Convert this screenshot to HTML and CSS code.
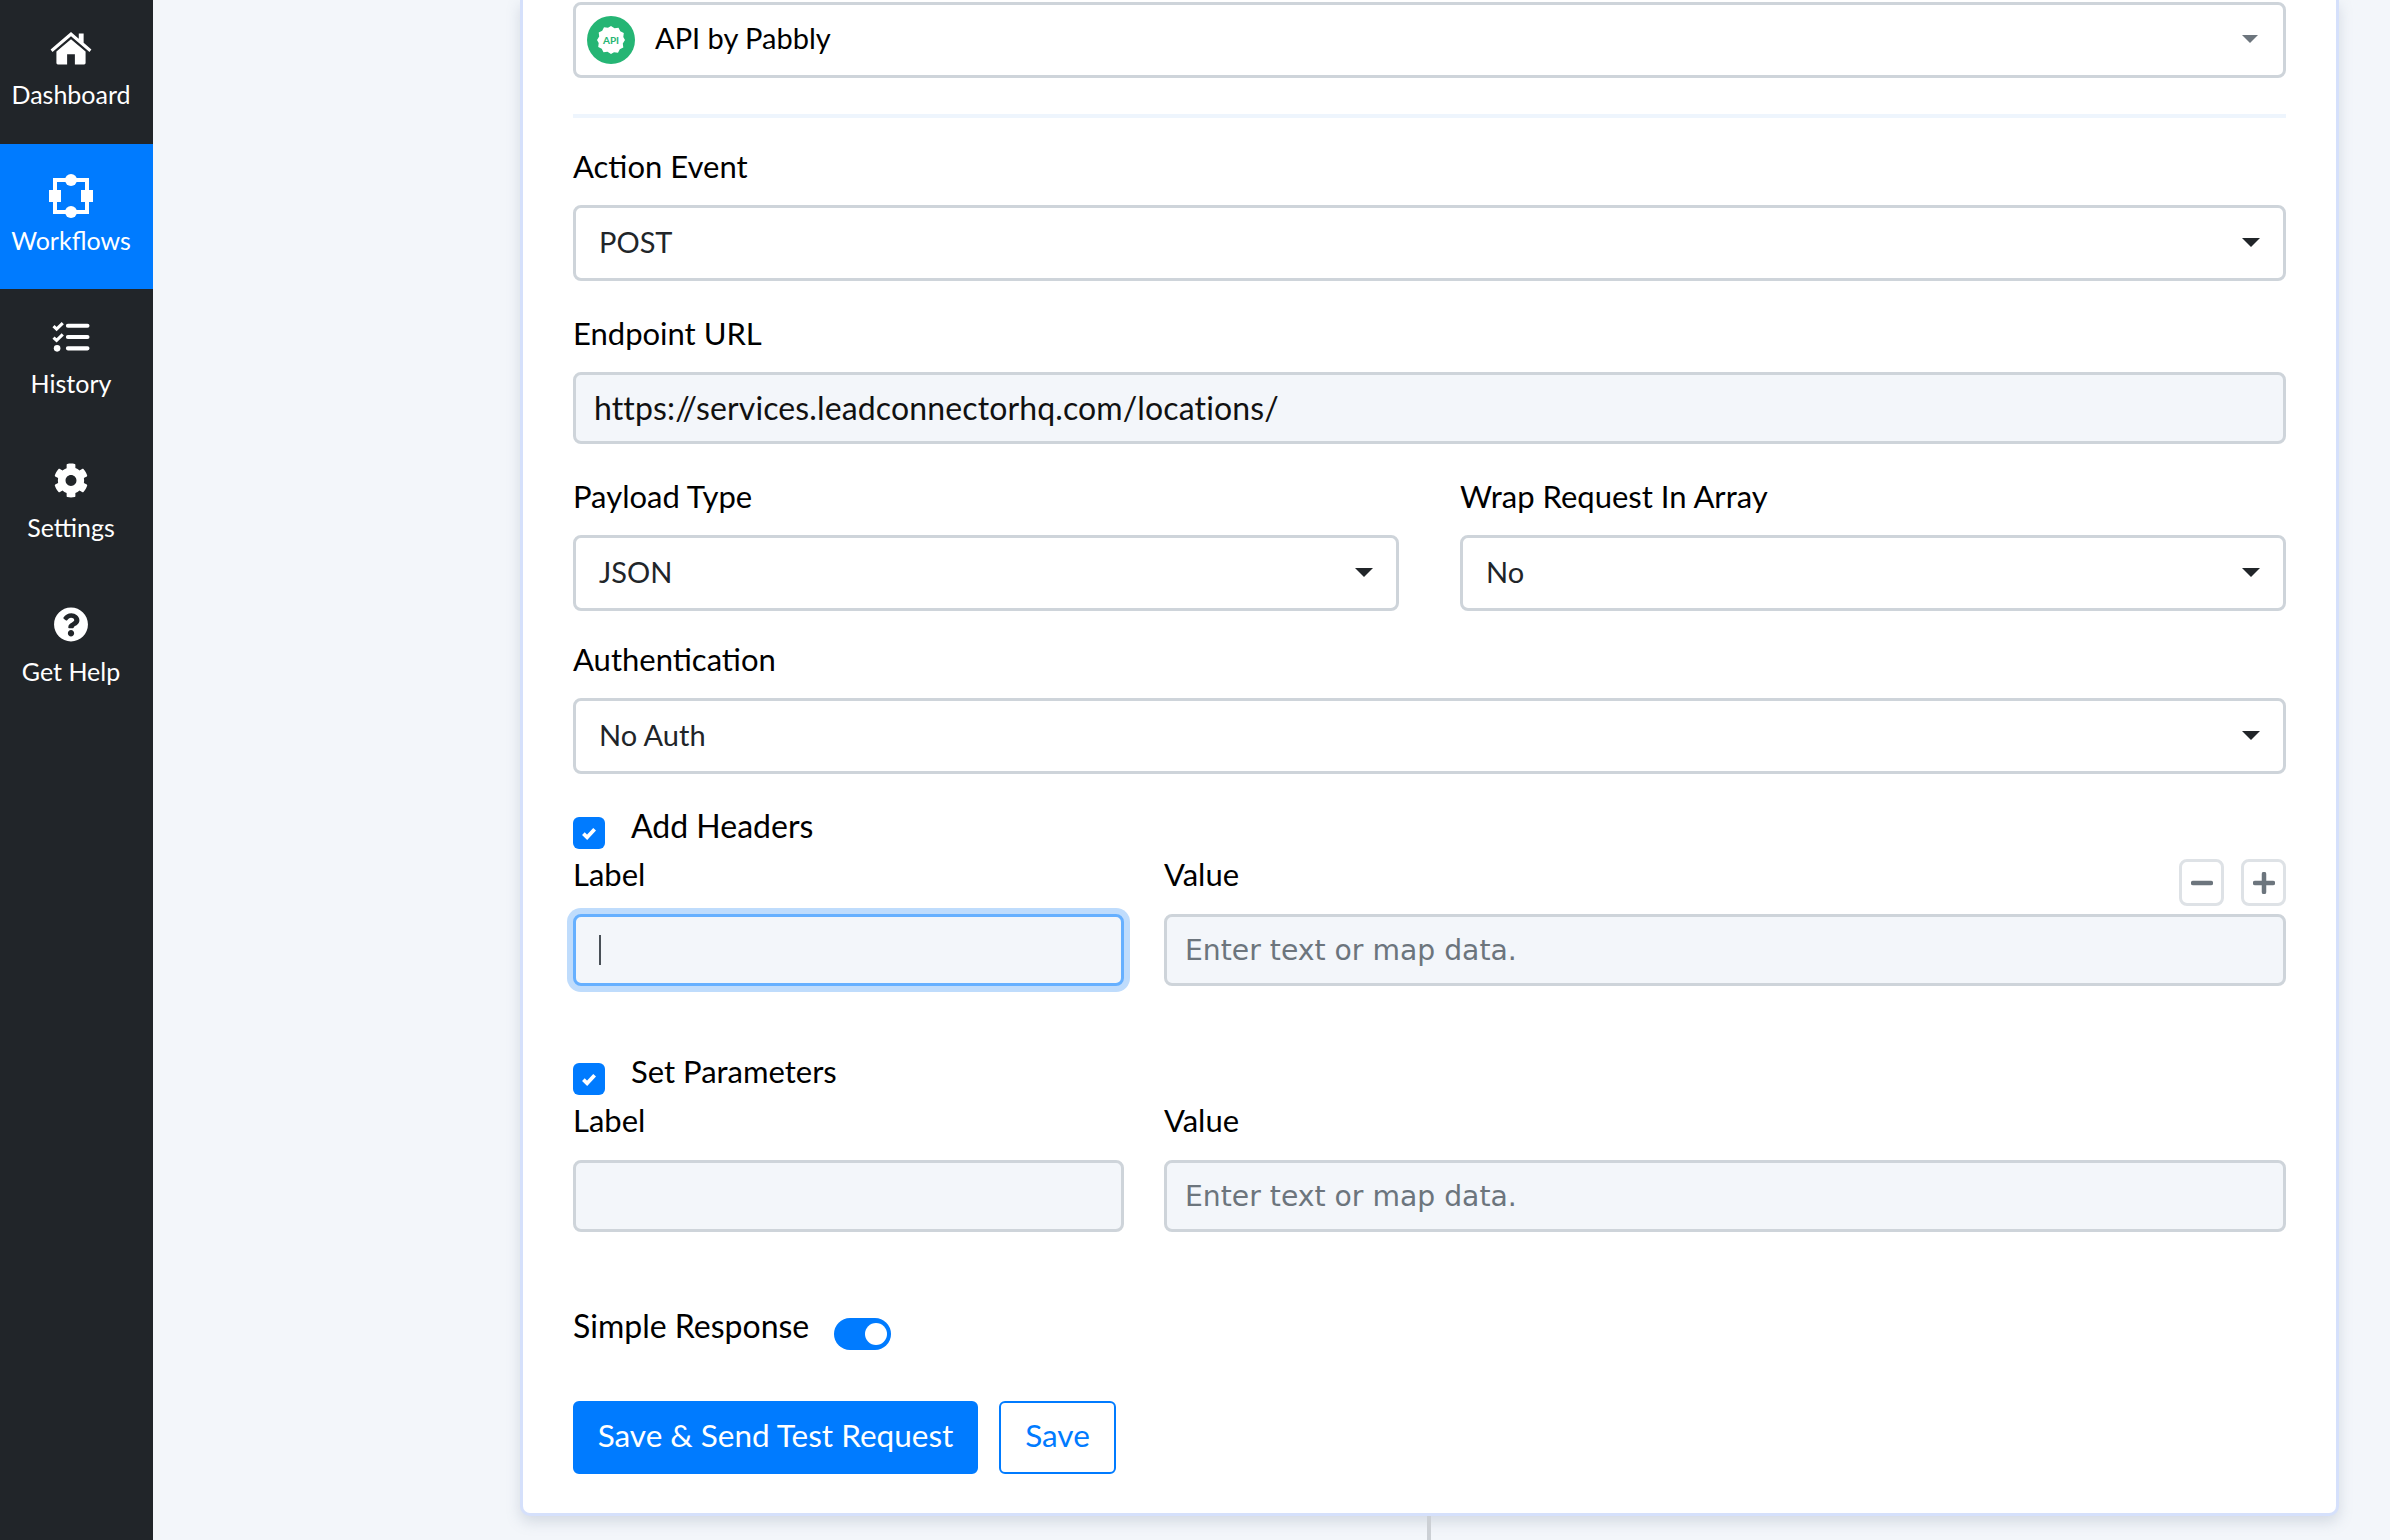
FILE: index.html
```html
<!DOCTYPE html>
<html lang="en">
<head>
  <meta charset="UTF-8">
  <meta name="viewport" content="width=device-width, initial-scale=1.0">
  <title>Workflow</title>
  <link rel="stylesheet" href="styles.css">
</head>
<body>
  <nav class="sidebar">
    <a class="nav-item">
      <svg class="nav-icon" viewBox="0 -2 44 36"><path fill="#fff" d="M22 0 1 18l2 2.600L22 4.400l19 16.200 2-2.600-8-6.800V1.500h-5v5.500z"/><path fill="#fff" d="M22 7.500 7 20.200V32a1.500 1.500 0 0 0 1.500 1.500H18V23h8v10.500h9.500A1.500 1.500 0 0 0 37 32V20.200z"/></svg>
      <span>Dashboard</span>
    </a>
    <a class="nav-item active">
      <svg class="nav-icon nav-icon-large" viewBox="0 0 44 44"><path fill="none" stroke="#fff" stroke-width="4" d="M6 6h32v32H6z"/><circle fill="#fff" cx="22" cy="6" r="6"/><circle fill="#fff" cx="22" cy="38" r="6"/><path fill="#fff" d="M0 16h12v12H0zM32 16h12v12H32z"/></svg>
      <span>Workflows</span>
    </a>
    <a class="nav-item">
      <svg class="nav-icon" viewBox="0 -3 36 34"><path fill="none" stroke="#fff" stroke-width="3" d="M1 4l3 2.800L10 1M1 15l3 2.800L10 12"/><circle fill="#fff" cx="4.500" cy="25.500" r="3.200"/><path stroke="#fff" stroke-width="4" stroke-linecap="round" d="M15 3.500h19M15 14.500h19M15 25.500h19"/></svg>
      <span>History</span>
    </a>
    <a class="nav-item">
      <svg class="nav-icon" viewBox="0 0 512 512"><path fill="#fff" d="M487.400 315.700l-42.600-24.600c4.300-23.200 4.300-47 0-70.200l42.600-24.600c4.900-2.800 7.100-8.600 5.500-14-11.100-35.600-30-67.800-54.700-94.600-3.800-4.100-10-5.100-14.800-2.300L380.800 110c-17.900-15.400-38.500-27.300-60.800-35.100V25.800c0-5.600-3.900-10.500-9.400-11.700-36.700-8.200-74.300-7.800-109.200 0-5.500 1.200-9.400 6.100-9.400 11.700V75c-22.200 7.900-42.800 19.800-60.800 35.100L88.700 85.500c-4.900-2.800-11-1.900-14.800 2.300-24.700 26.700-43.600 58.900-54.700 94.600-1.700 5.400.6 11.200 5.500 14L67.300 221c-4.300 23.200-4.300 47 0 70.200l-42.600 24.600c-4.900 2.800-7.100 8.600-5.500 14 11.100 35.600 30 67.800 54.700 94.600 3.800 4.100 10 5.100 14.800 2.300l42.600-24.600c17.900 15.400 38.500 27.300 60.800 35.100v49.200c0 5.600 3.900 10.500 9.400 11.700 36.700 8.200 74.300 7.800 109.200 0 5.500-1.200 9.400-6.100 9.400-11.700v-49.200c22.200-7.900 42.800-19.800 60.800-35.100l42.600 24.600c4.900 2.800 11 1.900 14.800-2.300 24.700-26.700 43.600-58.900 54.700-94.600 1.500-5.500-.7-11.300-5.600-14.100zM256 336c-44.100 0-80-35.900-80-80s35.900-80 80-80 80 35.900 80 80-35.900 80-80 80z"/></svg>
      <span>Settings</span>
    </a>
    <a class="nav-item">
      <svg class="nav-icon" viewBox="0 0 512 512"><path fill="#fff" d="M504 256c0 137-111 248-248 248S8 393 8 256 119 8 256 8s248 111 248 248zM262.700 90c-54.500 0-89.300 23-116.500 63.800-3.500 5.300-2.400 12.400 2.700 16.300l34.700 26.300c5.200 3.900 12.600 3 16.700-2.100 17.900-22.700 30.100-35.800 57.300-35.800 20.400 0 45.700 13.100 45.700 32.900 0 15-12.400 22.700-32.500 34C247.100 238.500 216 254.900 216 296v4c0 6.600 5.400 12 12 12h56c6.600 0 12-5.400 12-12v-1.300c0-28.500 83.200-29.700 83.200-106.700 0-58-60.200-102-116.500-102zM256 338c-25.400 0-46 20.600-46 46 0 25.400 20.600 46 46 46s46-20.600 46-46c0-25.400-20.600-46-46-46z"/></svg>
      <span>Get Help</span>
    </a>
  </nav>

  <main class="content">
    <section class="card">
      <div class="select select-muted">
        <span class="app-logo">
          <svg viewBox="0 0 48 48"><circle cx="24" cy="24" r="24" fill="#25b574"/><path fill="#fff" d="M24 10l3.500 2.200 4-.5 1.800 3.500 3.500 1.800-.5 4L38 24l-2.200 3.500.5 4-3.500 1.800-1.800 3.500-4-.5L24 38l-3.500-2.200-4 .5-1.800-3.500-3.500-1.800.5-4L10 24l2.200-3.500-.5-4 3.500-1.800 1.800-3.500 4 .5z"/><text x="24" y="27.500" class="app-logo-text">API</text></svg>
        </span>
        <span class="select-value">API by Pabbly</span>
      </div>
      <hr class="divider">

      <label class="field-label">Action Event</label>
      <div class="select"><span class="select-value">POST</span></div>

      <label class="field-label">Endpoint URL</label>
      <div class="text-input url-input">https://services.leadconnectorhq.com/locations/</div>

      <div class="two-col">
        <div>
          <label class="field-label">Payload Type</label>
          <div class="select"><span class="select-value">JSON</span></div>
        </div>
        <div>
          <label class="field-label">Wrap Request In Array</label>
          <div class="select"><span class="select-value">No</span></div>
        </div>
      </div>

      <label class="field-label">Authentication</label>
      <div class="select"><span class="select-value">No Auth</span></div>

      <div class="check-row">
        <span class="checkbox"><svg viewBox="0 0 16 16"><path fill="none" stroke="#fff" stroke-width="3" d="M3.500 8.500l3 3 6-6.500"/></svg></span>
        <span class="check-label">Add Headers</span>
      </div>
      <div class="pair-row">
        <div class="pair-label-col">
          <span class="pair-label">Label</span>
          <div class="text-input focused"><span class="caret"></span></div>
        </div>
        <div class="pair-value-col">
          <div class="pair-head">
            <span class="pair-label">Value</span>
            <div class="row-buttons">
              <span class="row-button"><svg viewBox="0 0 22 22"><path stroke="#6c757d" stroke-width="4.500" stroke-linecap="round" d="M2 11h18"/></svg></span>
              <span class="row-button"><svg viewBox="0 0 22 22"><path stroke="#6c757d" stroke-width="4.500" stroke-linecap="round" d="M2 11h18M11 2v18"/></svg></span>
            </div>
          </div>
          <div class="text-input placeholder">Enter text or map data.</div>
        </div>
      </div>

      <div class="check-row check-row-second">
        <span class="checkbox"><svg viewBox="0 0 16 16"><path fill="none" stroke="#fff" stroke-width="3" d="M3.500 8.500l3 3 6-6.500"/></svg></span>
        <span class="check-label check-label-params">Set Parameters</span>
      </div>
      <div class="pair-row">
        <div class="pair-label-col">
          <span class="pair-label">Label</span>
          <div class="text-input"></div>
        </div>
        <div class="pair-value-col">
          <div class="pair-head"><span class="pair-label">Value</span></div>
          <div class="text-input placeholder">Enter text or map data.</div>
        </div>
      </div>

      <div class="toggle-row">
        <span class="toggle-label">Simple Response</span>
        <span class="toggle"></span>
      </div>

      <div class="actions">
        <button class="btn btn-primary">Save &amp; Send Test Request</button>
        <button class="btn btn-outline">Save</button>
      </div>
    </section>
    <div class="connector"></div>
  </main>
</body>
</html>
```

FILE: styles.css
```css
* {
    box-sizing: border-box;
}

html, body {
    height: 100%;
}

body {
    margin: 0;
    display: flex;
    overflow: hidden;
    font-family: Lato, "Noto Sans", sans-serif;
    font-size: 31px;
    color: #000;
    background-color: #f3f6fa;
}

.sidebar {
    width: 153px;
    flex-shrink: 0;
    background-color: #212529;
}

.nav-item {
    display: flex;
    flex-direction: column;
    align-items: center;
    height: 144px;
    padding-top: 30px;
    padding-right: 11px;
    color: #fff;
    font-size: 25px;
}

.nav-item.active {
    height: 145px;
    background-color: #007bff;
}

.nav-icon {
    height: 35px;
    width: 44px;
    margin-bottom: 14px;
}

.nav-icon-large {
    height: 44px;
    margin-bottom: 7px;
}

.content {
    flex: 1;
    padding-left: 367px;
    padding-right: 51px;
}

.card {
    height: 1516px;
    padding: 2px 50px 0;
    background-color: #fff;
    border: solid #d5e0fb;
    border-width: 0 3px 3px;
    border-radius: 0 0 10px 10px;
    box-shadow: 0 6px 14px rgba(120, 135, 160, 0.25);
}

.connector {
    width: 4px;
    height: 30px;
    margin-left: 907px;
    background-color: #ccd0d5;
}

.select {
    position: relative;
    display: flex;
    align-items: center;
    height: 76px;
    padding-left: 23px;
    background-color: #fff;
    border: 3px solid #ced4da;
    border-radius: 8px;
}

.select::after {
    content: "";
    position: absolute;
    right: 23px;
    top: 30px;
    border-style: solid;
    border-width: 9px 9px 0;
    border-color: #212529 transparent transparent;
}

.select-value {
    padding-bottom: 3px;
    font-size: 29px;
    color: #212529;
}

.select-muted {
    padding-left: 11px;
}

.select-muted::after {
    right: 25px;
    border-width: 8px 8px 0;
    border-color: #6c757d transparent transparent;
}

.select-muted .select-value {
    padding-bottom: 5px;
    color: #000;
}

.app-logo {
    display: flex;
    width: 48px;
    height: 48px;
    margin-right: 20px;
}

.app-logo-text {
    fill: #25b574;
    font-size: 10px;
    font-weight: 700;
    text-anchor: middle;
}

.divider {
    height: 4px;
    margin: 36px 0 0;
    background-color: #eef5fd;
    border: none;
}

.field-label {
    display: block;
    height: 40px;
    margin: 32px 0 19px;
    line-height: 40px;
}

.divider + .field-label,
.two-col + .field-label {
    margin-top: 28px;
}

.text-input {
    height: 72px;
    padding: 0 18px;
    line-height: 66px;
    background-color: #f3f6fa;
    border: 3px solid #ced4da;
    border-radius: 8px;
}

.url-input {
    font-size: 32px;
    letter-spacing: 0.13px;
    color: #111;
}

.placeholder {
    font-family: "DejaVu Sans", sans-serif;
    font-size: 28.250px;
    line-height: 68px;
    color: #6c757d;
}

.focused {
    display: flex;
    align-items: center;
    border-color: #66b0ff;
    box-shadow: 0 0 0 6px #bfdcfc;
}

.caret {
    width: 2px;
    height: 30px;
    margin-left: 5px;
    background-color: #495057;
}

.two-col {
    display: grid;
    grid-template-columns: 1fr 1fr;
    gap: 61px;
}

.check-row {
    display: flex;
    align-items: flex-start;
    height: 38px;
    margin-top: 43px;
}

.check-row-second {
    margin-top: 77px;
}

.checkbox {
    display: flex;
    align-items: center;
    justify-content: center;
    width: 32px;
    height: 32px;
    background-color: #007bff;
    border-radius: 6px;
}

.checkbox svg {
    width: 20px;
    height: 20px;
}

.check-label {
    height: 30px;
    margin-top: -9px;
    margin-left: 26px;
    font-size: 32px;
    line-height: 36px;
}

.check-label-params {
    margin-top: -10px;
    font-size: 31px;
}

.pair-row {
    display: flex;
    gap: 40px;
}

.pair-label-col {
    width: 551px;
}

.pair-value-col {
    flex: 1;
}

.pair-label {
    display: block;
    height: 59px;
    line-height: 38px;
}

.pair-head {
    display: flex;
    justify-content: space-between;
    height: 59px;
}

.row-buttons {
    display: flex;
    gap: 17px;
    margin-top: 4px;
}

.row-button {
    display: flex;
    align-items: center;
    justify-content: center;
    width: 45px;
    height: 47px;
    border: 3px solid #dee2e6;
    border-radius: 8px;
}

.row-button svg {
    width: 22px;
    height: 22px;
}

.toggle-row {
    display: flex;
    align-items: flex-start;
    margin-top: 74px;
}

.toggle-label {
    font-size: 32px;
    line-height: 40px;
}

.toggle {
    position: relative;
    width: 57px;
    height: 32px;
    margin-left: 25px;
    margin-top: 12px;
    background-color: #007bff;
    border-radius: 16px;
}

.toggle::after {
    content: "";
    position: absolute;
    top: 5px;
    right: 4px;
    width: 22px;
    height: 22px;
    background-color: #fff;
    border-radius: 50%;
}

.actions {
    display: flex;
    gap: 21px;
    margin-top: 51px;
}

.btn {
    height: 73px;
    padding: 0 0 5px;
    font-family: inherit;
    font-size: 31.500px;
    border-radius: 6px;
}

.btn-primary {
    width: 405px;
    color: #fff;
    background-color: #007bff;
    border: 2px solid #007bff;
}

.btn-outline {
    width: 117px;
    color: #007bff;
    background-color: #fff;
    border: 2px solid #007bff;
}
```
